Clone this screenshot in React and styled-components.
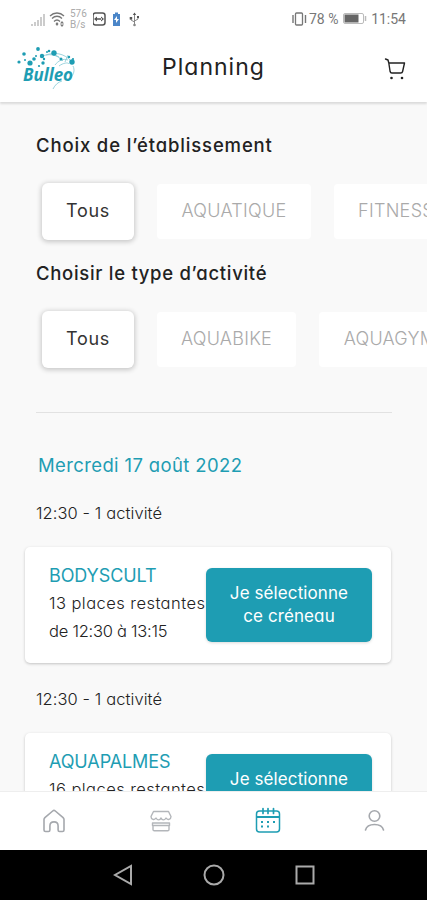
import React from "react";
import styled, { createGlobalStyle, css } from "styled-components";

const teal = "#1e9db3";

const establishments = [
  { name: "Tous", width: 92, track: 0.75, active: true },
  { name: "AQUATIQUE", width: 154, track: 0.3 },
  { name: "FITNESS", width: 124, track: 0.3 },
];

const activityTypes = [
  { name: "Tous", width: 92, track: 0.75, active: true },
  { name: "AQUABIKE", width: 139, track: 0.25 },
  { name: "AQUAGYM", width: 142, track: 0.2 },
];

const slots = [
  {
    name: "BODYSCULT",
    track: -0.1,
    places: "13 places restantes",
    hours: "de 12:30 à 13:15",
  },
  {
    name: "AQUAPALMES",
    track: -0.1,
    places: "16 places restantes",
    hours: "de 12:30 à 13:15",
  },
];

const GlobalStyle = createGlobalStyle`
  *, *:before, *:after {
    box-sizing: border-box;
  }
  body {
    margin: 0;
    background: #f9f9f9;
    font-family: Inter, "Open Sans", sans-serif;
    font-feature-settings: "cv11" 1, "kern" 1;
  }
  h1, h2, h3, p {
    margin: 0;
    font-weight: 400;
  }
  button {
    font-family: inherit;
    font-feature-settings: inherit;
    border: none;
    padding: 0;
  }
  svg {
    display: block;
    flex: none;
  }
`;

const Phone = styled.div`
  width: 427px;
  height: 900px;
  display: flex;
  flex-direction: column;
  overflow: hidden;
`;

const StatusBar = styled.div`
  flex: 0 0 37px;
  display: flex;
  justify-content: space-between;
  background: white;
  padding: 0 21px 0 30px;
  font-family: Roboto, sans-serif;
  color: #777;
`;

const StatusGroup = styled.div`
  display: flex;
  align-items: center;
  font-size: 14px;
`;

const Speed = styled.div`
  width: 17px;
  margin: 0 6px 0 5px;
  font-size: 10px;
  line-height: 11px;
  color: #aaa;
`;

const StatusText = styled.span`
  width: ${(props) => props.$width}px;
  margin-right: ${(props) => props.$gap || 0}px;
  white-space: nowrap;
  text-align: right;
`;

const Header = styled.header`
  flex: 0 0 65px;
  display: grid;
  grid-template-columns: 80px 1fr 80px;
  background: white;
  box-shadow: 0 2px 2px rgba(0, 0, 0, 0.12);
  z-index: 1;
  h1 {
    font-size: 23px;
    line-height: 60px;
    letter-spacing: 1px;
    text-align: center;
    color: #222;
  }
`;

const LogoBox = styled.div`
  padding: 8px 0 0 16px;
`;

const CartBox = styled.div`
  padding: 19px 0 0 37px;
`;

const Content = styled.main`
  flex: 1;
  min-height: 0;
  overflow: hidden;
  padding-top: 31px;
`;

const SectionTitle = styled.h2`
  padding-left: 36px;
  font-size: 18.5px;
  font-weight: 450;
  line-height: 24px;
  letter-spacing: ${(props) => props.$track}px;
  color: #222;
`;

const ChipRow = styled.div`
  display: flex;
  align-items: center;
  gap: 23px;
  height: 58px;
  margin: 25px 0 21px;
  padding-left: 42px;
`;

const Chip = styled.button`
  flex: 0 0 ${(props) => props.$width}px;
  height: 55px;
  padding-bottom: 2px;
  border-radius: 4px;
  background: white;
  font-size: 18px;
  font-weight: 300;
  letter-spacing: ${(props) => props.$track}px;
  color: #aaa;
  ${(props) =>
    props.$active &&
    css`
      height: 57px;
      border-radius: 6px;
      font-weight: 400;
      color: #333;
      box-shadow: 0 1px 5px 1px rgba(0, 0, 0, 0.2);
    `}
`;

const Divider = styled.hr`
  height: 1px;
  margin: 44px 35px 0 36px;
  border: none;
  background: #e2e2e2;
`;

const DayTitle = styled.h2`
  margin: 40px 0 24px 38px;
  font-size: 18.5px;
  line-height: 24px;
  letter-spacing: 0.37px;
  color: ${teal};
`;

const TimeLabel = styled.p`
  padding-left: 36px;
  font-size: 16.5px;
  font-weight: 300;
  line-height: 24px;
  letter-spacing: 0.08px;
  color: #222;
`;

const Card = styled.article`
  display: flex;
  align-items: center;
  height: 116px;
  margin: 22px 36px 24px 25px;
  padding: 0 19px 0 24px;
  border-radius: 5px;
  background: white;
  box-shadow: 0 1px 3px rgba(0, 0, 0, 0.22);
`;

const CardInfo = styled.div`
  flex: 0 0 157px;
  margin-bottom: 4px;
  white-space: nowrap;
  h3 {
    font-size: 18px;
    line-height: 27px;
    letter-spacing: ${(props) => props.$track}px;
    color: ${teal};
  }
`;

const CardLine = styled.p`
  font-size: 16.5px;
  font-weight: 300;
  line-height: 28px;
  letter-spacing: ${(props) => props.$track}px;
  color: #222;
`;

const SelectButton = styled.button`
  flex: 0 0 166px;
  height: 74px;
  border-radius: 6px;
  background: ${teal};
  color: white;
  font-size: 17px;
  line-height: 23px;
  letter-spacing: 0.1px;
  box-shadow: 0 1px 3px rgba(0, 0, 0, 0.15);
`;

const TabBar = styled.nav`
  flex: 0 0 59px;
  display: grid;
  grid-template-columns: repeat(4, 107px);
  place-items: center;
  border-top: 1px solid #eee;
  background: white;
`;

const AndroidBar = styled.div`
  flex: 0 0 50px;
  display: flex;
  align-items: center;
  justify-content: center;
  gap: 70px;
  background: black;
`;

const dots = [
  [3, 16, 1.6], [8, 8, 1.8], [14, 17, 2.6], [22, 3, 1.9], [26, 10, 2.2],
  [27, 17, 1.7], [31, 6, 1], [18, 13, 1.8], [38, 7, 2.7], [20, 10, 1],
  [33, 5, 1.3], [23, 20, 1.1], [45, 13, 1.5], [56, 16, 2.7], [53, 11, 1.2],
  [57, 13, 1.1], [9, 14, 1], [28, 13, 1.2],
];

const Logo = () => (
  <svg width="62" height="48" viewBox="0 0 62 48">
    <g fill={teal}>
      {dots.map(([x, y, r], key) => (
        <circle key={key} cx={x} cy={y + 1} r={r} />
      ))}
    </g>
    <g fill="none" stroke={teal} strokeWidth="0.8" opacity="0.55">
      <path d="M24 12c8-4 17-3 23 4M30 10c8-3 18-2 25 6M39 20c3-4 8-7 13-5M43 21c4-3 9-4 10-2M35 8l8 4M52 10l-3 7" />
      <path d="M46 36c-4 1-7 4-9 8M57 21c2 4 1 8-3 13" />
    </g>
    <text
      x="7"
      y="35.5"
      fill={teal}
      fontFamily="Open Sans"
      fontSize="18"
      fontWeight="700"
      fontStyle="italic"
      textLength="50"
      lengthAdjust="spacingAndGlyphs"
    >
      Bulleo
    </text>
  </svg>
);

const SignalIcons = () => (
  <svg width="35" height="18" viewBox="0 0 35 18">
    <g fill="#ccc">
      <path d="M1 14h2v2H1zM4 12h2v4H4zM7 10h2v6H7zM10 7h2v9h-2zM13 4h2v12h-2z" />
    </g>
    <g fill="none" stroke="#777" strokeWidth="1.3">
      <path d="M20 6c4-4 10-4 14 0M22 8.500c3-3 7-3 10 0M24 11.500c2-2 4-2 6 0" />
    </g>
    <path d="M27 12l1.500 2 -1.500 2 -1.500-2zM32 11l2 2.500h-4zM32 17l-2-2.500h4z" fill="#777" />
  </svg>
);

const DeviceIcons = () => (
  <svg width="49" height="18" viewBox="0 0 49 18">
    <rect x="0" y="3" width="12" height="12" rx="2.5" fill="none" stroke="#555" strokeWidth="1.5" />
    <path d="M1 9l3-2.500v5zM11 9l-3-2.500v5zM3 8.300h6v1.400H3z" fill="#555" />
    <path d="M20 4h2V2.500h3V4h2v12h-7z" fill="#4b86c8" />
    <path d="M24 6l-3 4h2v3l3-4h-2z" fill="white" />
    <g fill="none" stroke="#888" strokeWidth="1">
      <path d="M41.500 3v13M41.500 12l-3.500-2V7M41.500 11l3.500-2V6" />
    </g>
    <path d="M41.500 2.500l1.700 2.500h-3.400zM36.700 7h2.500v2.500h-2.500zM44 6h2v2h-2z" fill="#555" />
    <circle cx="41.5" cy="15" r="1.3" fill="#888" />
  </svg>
);

const VibrateIcon = () => (
  <svg width="18" height="16" viewBox="0 0 18 16">
    <rect x="4.5" y="2" width="7" height="12" rx="1" fill="none" stroke="#777" strokeWidth="1.3" />
    <path d="M2 4v8M14.500 4v8" stroke="#777" strokeWidth="1.4" />
  </svg>
);

const BatteryIcon = () => (
  <svg width="25" height="12" viewBox="0 0 25 12">
    <rect x="0.5" y="0.5" width="20" height="10" rx="1.5" fill="white" stroke="#bbb" />
    <rect x="1.5" y="1.5" width="14" height="8" fill="#666" />
    <path d="M22.500 3v5" stroke="#bbb" strokeWidth="1.5" />
  </svg>
);

const CartIcon = () => (
  <svg width="24" height="26" viewBox="0 0 24 26">
    <path
      d="M1.500 3l2.500 1 .8 3 1.300 8.500c.2 1 .8 1.500 1.800 1.500h8.800c1 0 1.700-.5 1.900-1.500L20.500 7H4.800"
      fill="none"
      stroke="#222"
      strokeWidth="1.4"
      strokeLinecap="round"
      strokeLinejoin="round"
    />
    <circle cx="7.5" cy="22" r="1.3" fill="#222" />
    <circle cx="18" cy="22" r="1.3" fill="#222" />
  </svg>
);

const HomeIcon = () => (
  <svg width="24" height="26" viewBox="0 0 24 26">
    <path
      d="M2 11.500c0-.8.300-1.300.9-1.900L10.700 3c.8-.7 1.800-.7 2.600 0l7.800 6.600c.6.600.9 1.100.9 1.900V22c0 1-.6 1.500-1.500 1.500h-3c-.9 0-1.400-.5-1.400-1.500v-4c0-5.500-8.200-5.500-8.200 0v4c0 1-.5 1.500-1.400 1.500h-3C2.600 23.500 2 23 2 22z"
      fill="none"
      stroke="#a5a8ad"
      strokeWidth="1.6"
    />
  </svg>
);

const ShopIcon = () => (
  <svg width="24" height="24" viewBox="0 0 24 24">
    <g fill="none" stroke="#b3b6ba" strokeWidth="1.4" strokeLinejoin="round">
      <path d="M4.500 2.500h15l2.500 5c0 3-3.500 4-5 1.500-1.500 2.500-4 2.500-5 0-1 2.500-3.500 2.500-5 0C5.500 11.500 2 10.500 2 7.500z" />
      <path d="M3.500 14h17v2.500h-17zM4 17v3.500c0 .8.500 1.300 1.300 1.300h13.400c.8 0 1.300-.5 1.300-1.300V17" />
    </g>
  </svg>
);

const CalendarIcon = () => (
  <svg width="26" height="28" viewBox="0 0 26 28">
    <g fill="none" stroke={teal} strokeWidth="1.5" strokeLinecap="round">
      <rect x="1.5" y="4" width="23" height="21" rx="3" />
      <path d="M2 10h22" strokeWidth="1.9" />
      <path d="M8 1.500v5M13 1.500v5M18.500 1.500v5" strokeWidth="1.7" />
    </g>
    <path
      d="M6 14h2v2H6zM12 14h2v2h-2zM18 14h2v2h-2zM6 18.500h2v2H6zM12 18.500h2v2h-2z"
      fill={teal}
    />
  </svg>
);

const UserIcon = () => (
  <svg width="24" height="24" viewBox="0 0 24 24">
    <g fill="none" stroke="#a5a8ad" strokeWidth="1.6" strokeLinecap="round">
      <circle cx="11.5" cy="7" r="5.3" />
      <path d="M2.500 21c1-4 4-5.500 9-5.500s8 1.500 9 5.500" />
    </g>
  </svg>
);

const Filter = ({ title, track, options }) => (
  <section>
    <SectionTitle $track={track}>{title}</SectionTitle>
    <ChipRow>
      {options.map((option) => (
        <Chip
          key={option.name}
          $width={option.width}
          $track={option.track}
          $active={option.active}
        >
          {option.name}
        </Chip>
      ))}
    </ChipRow>
  </section>
);

const Slot = ({ slot }) => (
  <section>
    <TimeLabel>12:30 - 1 activité</TimeLabel>
    <Card>
      <CardInfo $track={slot.track}>
        <h3>{slot.name}</h3>
        <CardLine $track={0.45}>{slot.places}</CardLine>
        <CardLine $track={-0.25}>{slot.hours}</CardLine>
      </CardInfo>
      <SelectButton>
        Je sélectionne
        <br />
        ce créneau
      </SelectButton>
    </Card>
  </section>
);

function App() {
  return (
    <>
      <GlobalStyle />
      <Phone>
        <StatusBar>
          <StatusGroup>
            <SignalIcons />
            <Speed>
              576
              <br />
              B/s
            </Speed>
            <DeviceIcons />
          </StatusGroup>
          <StatusGroup>
            <VibrateIcon />
            <StatusText $width={29} $gap={5}>
              78 %
            </StatusText>
            <BatteryIcon />
            <StatusText $width={38}>11:54</StatusText>
          </StatusGroup>
        </StatusBar>
        <Header>
          <LogoBox>
            <Logo />
          </LogoBox>
          <h1>Planning</h1>
          <CartBox>
            <CartIcon />
          </CartBox>
        </Header>
        <Content>
          <Filter
            title="Choix de l’établissement"
            track={0.85}
            options={establishments}
          />
          <Filter
            title="Choisir le type d’activité"
            track={0.7}
            options={activityTypes}
          />
          <Divider />
          <DayTitle>Mercredi 17 août 2022</DayTitle>
          {slots.map((slot) => (
            <Slot key={slot.name} slot={slot} />
          ))}
        </Content>
        <TabBar>
          <HomeIcon />
          <ShopIcon />
          <CalendarIcon />
          <UserIcon />
        </TabBar>
        <AndroidBar>
          <svg width="20" height="22" viewBox="0 0 20 22">
            <path d="M18 2v18L2 11z" fill="none" stroke="#aaa" strokeWidth="2" />
          </svg>
          <svg width="22" height="22" viewBox="0 0 22 22">
            <circle cx="11" cy="11" r="9.5" fill="none" stroke="#aaa" strokeWidth="2" />
          </svg>
          <svg width="20" height="20" viewBox="0 0 20 20">
            <rect x="1.5" y="1.5" width="17" height="17" fill="none" stroke="#aaa" strokeWidth="2" />
          </svg>
        </AndroidBar>
      </Phone>
    </>
  );
}

export default App;
